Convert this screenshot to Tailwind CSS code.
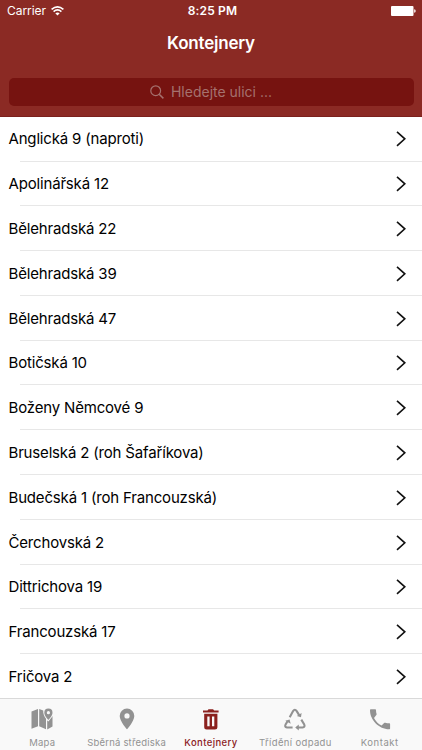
<!DOCTYPE html>
<html lang="cs">
<head>
<meta charset="utf-8">
<meta name="viewport" content="width=device-width, initial-scale=1">
<title>Kontejnery</title>
<script src="https://cdn.jsdelivr.net/npm/@tailwindcss/browser@4"></script>
</head>
<body class="bg-white font-['Inter','Liberation_Sans',sans-serif] text-black">
<div class="flex h-[750px] w-[422px] flex-col overflow-hidden">
  <header class="flex h-[117px] shrink-0 flex-col border-b border-[#7b211d] bg-[#8b2a24] text-white">
    <div class="grid h-[22px] shrink-0 grid-cols-3 items-center pl-[7px] pr-[6px] text-[12px] leading-[22px]">
      <div class="flex items-center gap-[5px] tracking-[-0.05px]"><span>Carrier</span>
        <svg class="h-[10px] w-[13px]" viewBox="0 0 13 10" fill="none" stroke="currentColor" stroke-width="1.7"><path d="M.6 3.300Q6.500-1.500 12.400 3.300M2.600 5.600Q6.500 2.300 10.400 5.600"/><path d="M6.500 9.600 4.300 7.300Q6.500 5.700 8.700 7.300Z" fill="currentColor" stroke="none"/></svg>
      </div>
      <div class="pl-[2px] text-center font-semibold tracking-[0.15px]">8:25 PM</div>
      <div class="flex justify-end"><svg class="h-[10px] w-[25px]" viewBox="0 0 25 10" fill="currentColor"><rect width="22.5" height="10" rx="1"/><path d="M23.2 3.2q1.5.3 1.5 1.8t-1.5 1.8z"/></svg></div>
    </div>
    <h1 class="h-[43px] text-center text-[17px] font-semibold leading-[43px] tracking-[-0.2px]">Kontejnery</h1>
    <div class="mx-[8.5px] mt-[13px] flex h-[28px] items-center justify-center gap-[7px] rounded-[5px] bg-[#761310] text-[14px] text-[#a5716e]">
      <svg class="h-[14px] w-[14px]" viewBox="0 0 14 14" fill="none" stroke="currentColor" stroke-width="1.2"><circle cx="5.7" cy="5.7" r="4.9"/><path d="m9.2 9.2 4.2 4.2" stroke-width="1.5"/></svg>
      <span class="pb-[2px]">Hledejte ulici ...</span>
    </div>
  </header>
  <main id="list" class="h-[581px] shrink-0 overflow-hidden"></main>
  <nav class="grid h-[52px] shrink-0 grid-cols-5 border-t border-[#d9d9d9] bg-[#f9f9f9] text-center text-[9.5px] leading-[12px] tracking-[0.2px] text-[#929292]">
    <div class="flex flex-col items-center gap-[6px] pt-[8px]">
      <svg class="h-[24px] w-[24px]" viewBox="0 0 24 24" fill="currentColor"><path fill-rule="evenodd" d="M1.500 4.500 8 2v17.200L1.500 21.800ZM9.200 2l4 1.500C13 6.500 14.300 9.500 16 11.800V22.300l-6.800-3ZM17.200 13.300l1.100 1.300c1.500-1.700 3.100-3.800 4.200-5.600V19.500l-5.300 3ZM18.400 1.600a4.100 4.100 0 0 0-4.100 4.100c0 3 4.100 7.300 4.100 7.300s4.100-4.300 4.100-7.300a4.100 4.100 0 0 0-4.100-4.100Zm0 2.500a1.600 1.600 0 1 1 0 3.200 1.600 1.600 0 0 1 0-3.200Z"/></svg><span>Mapa</span>
    </div>
    <div class="flex flex-col items-center gap-[6px] pt-[8px]">
      <svg class="h-[24px] w-[24px]" viewBox="0 0 24 24" fill="currentColor"><path fill-rule="evenodd" d="M12 1.600a7.300 7.300 0 0 0-7.300 7.300C4.700 14.200 12 22.300 12 22.300s7.300-8.100 7.300-13.400A7.300 7.300 0 0 0 12 1.600Zm0 4.700a2.600 2.600 0 1 1 0 5.200 2.600 2.600 0 0 1 0-5.200Z"/></svg><span class="whitespace-nowrap">Sběrná střediska</span>
    </div>
    <div class="flex flex-col items-center gap-[6px] pt-[8px] text-[#8b211e]">
      <svg class="h-[24px] w-[24px]" viewBox="0 0 24 24" fill="currentColor"><path fill-rule="evenodd" d="M4 3.500h4.500L9.500 2.200h4.600l1 1.300h4.500v2H4ZM5.200 6.700h13.200V20a2.500 2.500 0 0 1-2.500 2.500H7.700A2.500 2.500 0 0 1 5.200 20ZM8.300 9.500v9.700h2.300V9.500Zm4.700 0v9.700h2.300V9.500Z"/></svg><span class="font-medium tracking-[0.4px]">Kontejnery</span>
    </div>
    <div class="flex flex-col items-center gap-[6px] pt-[8px]">
      <svg class="h-[24px] w-[24px]" viewBox="0 0 24 24" fill="none" stroke="currentColor" stroke-width="2.1"><path d="M6.700 10.200 10.100 4.100Q11.800 1.300 13.700 4.100L16.300 8.400M18.300 12.600 21.100 17.300Q22.500 20.200 19.500 20.500H15M9.600 20.500H4Q1.300 20.100 2.600 17.400L4.500 14.200"/><path fill="currentColor" stroke="none" d="m13.800 9 4.200 1.300.6-4.300ZM15.800 17.500 12.200 20.500l3.600 3ZM2.300 13.800l4.300-1.200 1.100 4.200Z"/></svg><span class="whitespace-nowrap tracking-[0.35px]">Třídění odpadu</span>
    </div>
    <div class="flex flex-col items-center gap-[6px] pt-[8px]">
      <svg class="h-[24px] w-[24px]" viewBox="0 0 24 24" fill="currentColor"><path d="M6 10.900c1.700 3.300 4.300 5.900 7.600 7.600l2.500-2.500c.3-.3.800-.4 1.200-.3 1.200.4 2.500.6 3.800.6.600 0 1 .4 1 1v4c0 .6-.4 1-1 1C11.200 22.300 2 13.100 2 3.300c0-.6.5-1 1-1h4c.6 0 1 .4 1 1 0 1.300.2 2.500.6 3.700.1.400 0 .8-.3 1.100Z"/></svg><span class="tracking-[0.55px]">Kontakt</span>
    </div>
  </nav>
</div>
<script>
const streets = ["Anglická 9 (naproti)","Apolinářská 12","Bělehradská 22","Bělehradská 39","Bělehradská 47","Botičská 10","Boženy Němcové 9","Bruselská 2 (roh Šafaříkova)","Budečská 1 (roh Francouzská)","Čerchovská 2","Dittrichova 19","Francouzská 17","Fričova 2"];
document.getElementById("list").innerHTML = streets.map((s, i) => `
  <div class="relative flex h-[44.8px] items-center justify-between pl-[8.5px] pr-[16px] text-[15px] leading-[20px] tracking-[-0.17px]">
    <span>${s}</span>
    <svg class="h-[16px] w-[10px]" viewBox="0 0 10 16" fill="none" stroke="#111" stroke-width="1.6"><path d="m1 .8 7.800 7L1 14.800"/></svg>
    ${i < streets.length - 1 ? '<div class="absolute bottom-[0.3px] left-[20px] right-0 h-px bg-[#e7e7e7]"></div>' : ''}
  </div>`).join("");
</script>
</body>
</html>
